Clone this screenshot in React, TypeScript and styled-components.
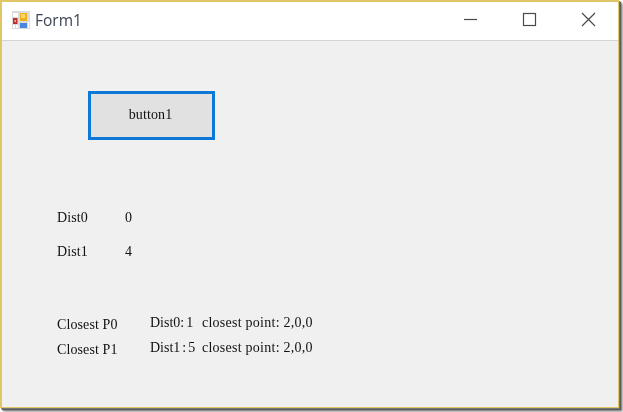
import { Fragment } from "react";
import styled, { createGlobalStyle } from "styled-components";

const GlobalStyle = createGlobalStyle`
  html, body {
    margin: 0;
    padding: 0;
    background: #ffffff;
    width: 623px;
    height: 412px;
    overflow: hidden;
  }
`;

const Shot = styled.div`
  width: 623px;
  height: 412px;
  box-sizing: border-box;
  padding-right: 4px;
  padding-bottom: 4px;
  background: #ffffff;
`;

const Window = styled.div`
  width: 100%;
  height: 100%;
  box-sizing: border-box;
  display: flex;
  flex-direction: column;
  border-style: solid;
  border-color: #e0c569;
  border-width: 2px 1px 1px 2px;
  box-shadow: 1px 1px 0 #777777, 2px 2px 1px #5a5a5a, 3px 3px 2px #8a8a8a, 4px 4px 2px #c4c4c4;
  background: #f0f0f0;
`;

const TitleBar = styled.header`
  height: 39px;
  flex: none;
  box-sizing: border-box;
  display: flex;
  align-items: center;
  padding: 0 0 3px 10px;
  background: #ffffff;
  border-bottom: 1px solid #d4d4d4;
`;

const AppIcon = styled.svg`
  width: 18px;
  height: 18px;
  flex: none;
  filter: blur(0.3px);
`;

const Title = styled.span`
  margin-left: 5px;
  font-family: "Open Sans", "Noto Sans", sans-serif;
  font-size: 15.5px;
  color: #3a4656;
  filter: blur(0.3px);
`;

const Controls = styled.div`
  margin-left: auto;
  display: flex;
  height: 100%;
`;

const ControlButton = styled.div`
  width: 59px;
  height: 100%;
  display: flex;
  align-items: center;
  justify-content: center;
`;

const ControlIcon = styled.svg`
  width: 15px;
  height: 15px;
  stroke: #4a4a4a;
  stroke-width: 1.2;
  fill: none;
  filter: blur(0.2px);
`;

const FormBody = styled.main`
  flex: 1;
  display: flex;
  flex-direction: column;
  padding: 50px 0 0 55px;
  font-family: "Liberation Serif", serif;
  font-size: 14px;
  letter-spacing: 0.1px;
  color: #111111;
`;

const Button1 = styled.div`
  width: 127px;
  height: 49px;
  margin-left: 31px;
  box-sizing: border-box;
  display: flex;
  align-items: center;
  justify-content: center;
  padding: 0 2px 2px 0;
  background: #e1e1e1;
  border: 3px solid #0e78d6;
`;

const BlurText = styled.span`
  filter: blur(0.35px);
  white-space: pre;
`;

const DistList = styled.div`
  margin-top: 70px;
  display: grid;
  grid-template-columns: 68px auto;
  justify-content: start;
  grid-auto-rows: 17px;
  row-gap: 17px;
`;

const ClosestList = styled.div`
  margin-top: 54px;
  display: grid;
  grid-template-columns: 93px auto;
  justify-content: start;
  grid-auto-rows: 17px;
  row-gap: 8px;
`;

const ClosestLabel = styled(BlurText)`
  transform: translateY(2px);
`;

const ResultRow = styled(BlurText)`
  display: flex;
`;

const ResultHead = styled.span`
  width: 52px;
  letter-spacing: 0;
  word-spacing: -1.5px;
`;

const ResultTail = styled.span`
  letter-spacing: 0.25px;
`;

const distRows = [
  { label: "Dist0", value: "0" },
  { label: "Dist1", value: "4" },
];

const closestRows = [
  { label: "Closest P0", head: "Dist0: 1", tail: "closest point: 2,0,0" },
  { label: "Closest P1", head: "Dist1 : 5", tail: "closest point: 2,0,0" },
];

export default function App() {
  return (
    <>
      <GlobalStyle />
      <Shot>
        <Window>
          <TitleBar>
            <AppIcon viewBox="0 0 18 18">
              <rect x="0" y="0" width="18" height="18" fill="#dcdcdc" />
              <rect x="1" y="2" width="5" height="4" fill="#ffffff" />
              <rect x="1" y="7" width="4.5" height="6" fill="#c0302a" />
              <rect x="2.5" y="9" width="1.5" height="2" fill="#f0b0a0" />
              <rect x="1" y="14" width="2" height="3" fill="#ffffff" />
              <rect x="4" y="14" width="2" height="3" fill="#ffffff" />
              <rect x="8" y="2" width="7" height="8" fill="#eeb21e" />
              <rect x="9" y="3" width="4" height="4" fill="#f8d868" />
              <rect x="8" y="12" width="7" height="5" fill="#4a86dc" />
              <rect x="16" y="11" width="1" height="6" fill="#ffffff" />
            </AppIcon>
            <Title>Form1</Title>
            <Controls>
              <ControlButton>
                <ControlIcon viewBox="0 0 15 15">
                  <path d="M1 7.5H14" />
                </ControlIcon>
              </ControlButton>
              <ControlButton>
                <ControlIcon viewBox="0 0 15 15">
                  <rect x="1.5" y="1.5" width="12" height="12" />
                </ControlIcon>
              </ControlButton>
              <ControlButton>
                <ControlIcon viewBox="0 0 15 15">
                  <path d="M1 1L14 14M14 1L1 14" />
                </ControlIcon>
              </ControlButton>
            </Controls>
          </TitleBar>
          <FormBody>
            <Button1>
              <BlurText>button1</BlurText>
            </Button1>
            <DistList>
              {distRows.map((row) => (
                <Fragment key={row.label}>
                  <BlurText>{row.label}</BlurText>
                  <BlurText>{row.value}</BlurText>
                </Fragment>
              ))}
            </DistList>
            <ClosestList>
              {closestRows.map((row) => (
                <Fragment key={row.label}>
                  <ClosestLabel>{row.label}</ClosestLabel>
                  <ResultRow>
                    <ResultHead>{row.head}</ResultHead>
                    <ResultTail>{row.tail}</ResultTail>
                  </ResultRow>
                </Fragment>
              ))}
            </ClosestList>
          </FormBody>
        </Window>
      </Shot>
    </>
  );
}
